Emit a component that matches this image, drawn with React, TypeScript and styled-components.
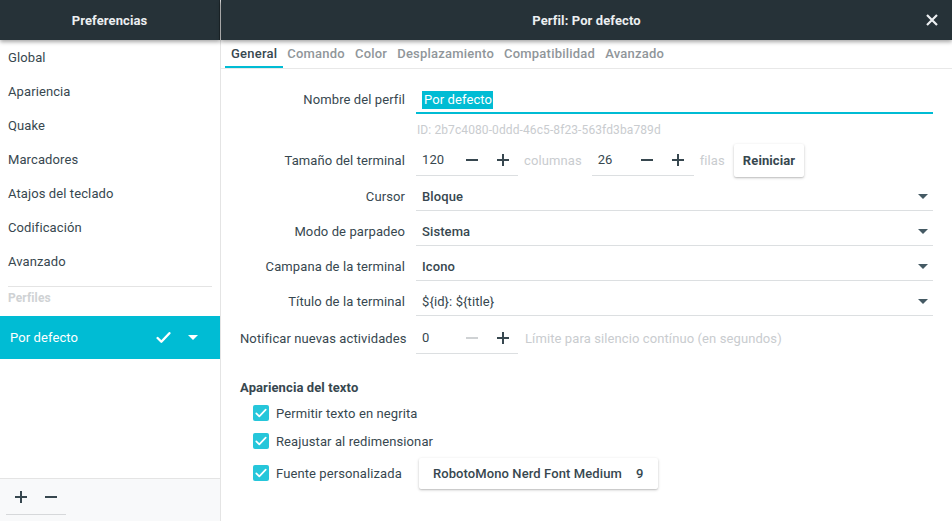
import styled, { createGlobalStyle } from "styled-components";

const GlobalStyle = createGlobalStyle`
  html, body {
    margin: 0;
    padding: 0;
    background: #ffffff;
  }
  * {
    box-sizing: border-box;
  }
  body {
    font-family: Roboto, "Noto Sans", "Liberation Sans", sans-serif;
    font-size: 13px;
    letter-spacing: 0.1px;
    color: #37474f;
  }
`;

const ACCENT = "#00bcd4";
const DARK = "#263238";

const Window = styled.div`
  width: 952px;
  height: 521px;
  display: flex;
  overflow: hidden;
  background: #fff;
`;

const Sidebar = styled.aside`
  width: 221px;
  flex-shrink: 0;
  display: flex;
  flex-direction: column;
  border-right: 1px solid #e4e4e4;
`;

const Main = styled.main`
  flex: 1;
  display: flex;
  flex-direction: column;
  min-width: 0;
`;

const HeaderBar = styled.header<{ $divider?: boolean }>`
  height: 40px;
  flex-shrink: 0;
  background: ${DARK};
  color: #eceff1;
  font-weight: 700;
  font-size: 13px;
  display: flex;
  align-items: center;
  justify-content: center;
  position: relative;
  z-index: 2;
  box-shadow: 0 2px 4px rgba(0, 0, 0, 0.35);
  border-right: ${(p) => (p.$divider ? "1px solid #1c2529" : "none")};
`;

const CloseButton = styled.button`
  position: absolute;
  right: 13px;
  top: 13px;
  width: 14px;
  height: 14px;
  padding: 0;
  border: none;
  background: transparent;
  display: flex;
`;

const NavList = styled.nav`
  display: flex;
  flex-direction: column;
  flex: 1;
`;

const NavItem = styled.div`
  height: 34px;
  display: flex;
  align-items: center;
  padding-left: 8px;
  color: #37474f;
`;

const Divider = styled.div`
  height: 1px;
  background: #e4e4e4;
  margin: 8px 8px 0;
`;

const SectionTitle = styled.div`
  height: 29px;
  padding: 4px 0 0 8px;
  line-height: 14px;
  font-size: 12px;
  font-weight: 700;
  color: #cfd2d4;
`;

const ProfileRow = styled.div`
  height: 43px;
  background: ${ACCENT};
  color: #fff;
  display: flex;
  align-items: center;
  padding: 0 22px 0 10px;
  font-size: 13px;
`;

const ProfileName = styled.span`
  flex: 1;
`;

const ProfileIcons = styled.div`
  display: flex;
  align-items: center;
  gap: 17px;
`;

const SidebarFooter = styled.div`
  height: 43px;
  flex-shrink: 0;
  background: #f8f9fa;
  border-top: 1px solid #e4e4e4;
  padding: 0 6px;
  display: flex;
  align-items: flex-start;
`;

const FooterButtons = styled.div`
  display: flex;
  width: 60px;
  height: 36px;
  border-bottom: 1px solid #d6d8da;
`;

const IconButton = styled.button<{ $width?: number }>`
  width: ${(p) => p.$width ?? 30}px;
  height: 100%;
  padding: 0;
  border: none;
  background: transparent;
  display: flex;
  align-items: center;
  justify-content: center;
`;

const Tabs = styled.div`
  height: 29px;
  flex-shrink: 0;
  display: flex;
  padding-left: 4px;
  border-bottom: 1px solid #e8e8e8;
`;

const Tab = styled.div<{ $active?: boolean }>`
  padding: 0 6px;
  margin-right: -2px;
  display: flex;
  align-items: center;
  font-weight: 500;
  letter-spacing: 0.22px;
  color: ${(p) => (p.$active ? "#37474f" : "#90969a")};
  border-bottom: 2px solid ${(p) => (p.$active ? ACCENT : "transparent")};
`;

const Form = styled.div`
  padding: 15px 19px 0 19px;
  display: flex;
  flex-direction: column;
`;

const Row = styled.div<{ $height: number; $top: number }>`
  display: flex;
  align-items: center;
  height: ${(p) => p.$height}px;
  margin-top: ${(p) => p.$top}px;
`;

const Label = styled.div`
  width: 165px;
  flex-shrink: 0;
  text-align: right;
  margin-right: 11px;
  color: #37474f;
  white-space: nowrap;
`;

const Control = styled.div`
  flex: 1;
  display: flex;
  align-items: center;
  height: 100%;
`;

const TextInput = styled.div`
  flex: 1;
  height: 100%;
  display: flex;
  align-items: center;
  padding: 3px 0 0 6px;
  border-bottom: 2px solid ${ACCENT};
`;

const Highlight = styled.span`
  background: ${ACCENT};
  color: #fff;
  padding: 1px 1px 2px 2px;
`;

const Hint = styled.div<{ $gap?: number }>`
  color: #c9cccf;
  margin-left: ${(p) => p.$gap ?? 0}px;
  margin-right: ${(p) => p.$gap ?? 0}px;
  white-space: nowrap;
`;

const IdText = styled(Hint)`
  font-size: 12px;
  padding: 1px 0 0 1px;
`;

const Spinner = styled.div`
  width: 102px;
  height: 32px;
  display: flex;
  align-items: center;
  border-bottom: 1px solid #dcdfe1;
  align-self: flex-start;
`;

const SpinValue = styled.div`
  width: 40px;
  padding-left: 6px;
  color: #37474f;
`;

const Spacer = styled.div<{ $width: number }>`
  width: ${(p) => p.$width}px;
  flex-shrink: 0;
`;

const RaisedButton = styled.button`
  height: 33px;
  padding: 0 9px;
  border: none;
  border-radius: 2px;
  background: #fff;
  box-shadow: 0 1px 3px rgba(0, 0, 0, 0.22), 0 1px 1px rgba(0, 0, 0, 0.08);
  font-family: inherit;
  font-size: 13px;
  letter-spacing: 0.1px;
  font-weight: 700;
  color: #37474f;
  display: flex;
  align-items: center;
  gap: 14px;
`;

const Select = styled.div<{ $bold?: boolean }>`
  flex: 1;
  height: 30px;
  display: flex;
  align-items: center;
  padding: 1px 5px 0 6px;
  border-bottom: 1px solid #dcdfe1;
  font-weight: ${(p) => (p.$bold ? 500 : 400)};
  color: #37474f;
`;

const SelectText = styled.span`
  flex: 1;
`;

const Heading = styled.div`
  margin-top: 23px;
  height: 20px;
  display: flex;
  align-items: center;
  font-weight: 700;
  color: #37474f;
`;

const CheckRow = styled.div<{ $height: number; $top?: number }>`
  height: ${(p) => p.$height}px;
  margin-top: ${(p) => p.$top ?? 0}px;
  padding-left: 13px;
  display: flex;
  align-items: center;
`;

const CheckBox = styled.span`
  width: 16px;
  height: 16px;
  border-radius: 2px;
  background: #26c6da;
  display: flex;
  align-items: center;
  justify-content: center;
  margin-right: 7px;
`;

const FontButton = styled(RaisedButton)`
  margin-left: 17px;
  height: 31px;
  padding: 0 15px 0 14px;
  font-weight: 500;
`;

const Minus = ({ color = "#37474f" }: { color?: string }) => (
  <svg width="12" height="12" viewBox="0 0 12 12">
    <path d="M0 6h12" stroke={color} strokeWidth="2" />
  </svg>
);

const Plus = ({ color = "#37474f" }: { color?: string }) => (
  <svg width="12" height="12" viewBox="0 0 12 12">
    <path d="M0 6h12M6 0v12" stroke={color} strokeWidth="2" />
  </svg>
);

const Caret = ({ color = "#455a64" }: { color?: string }) => (
  <svg width="10" height="5" viewBox="0 0 10 5">
    <path d="M0 0h10L5 5z" fill={color} />
  </svg>
);

const Check = ({ size = 14, width = 2 }: { size?: number; width?: number }) => (
  <svg width={size} height={size} viewBox="0 0 14 14">
    <path
      d="M1.5 7.5l3.5 3.5 7.5-8"
      fill="none"
      stroke="#fff"
      strokeWidth={width}
      strokeLinecap="round"
      strokeLinejoin="round"
    />
  </svg>
);

const SpinBox = ({ value, minusColor }: { value: string; minusColor?: string }) => (
  <Spinner>
    <SpinValue>{value}</SpinValue>
    <IconButton $width={31}>
      <Minus color={minusColor} />
    </IconButton>
    <IconButton $width={31}>
      <Plus />
    </IconButton>
  </Spinner>
);

const navItems = [
  "Global",
  "Apariencia",
  "Quake",
  "Marcadores",
  "Atajos del teclado",
  "Codificación",
  "Avanzado",
];

const tabs = [
  "General",
  "Comando",
  "Color",
  "Desplazamiento",
  "Compatibilidad",
  "Avanzado",
];

const selects = [
  { label: "Cursor", value: "Bloque", bold: true },
  { label: "Modo de parpadeo", value: "Sistema", bold: true },
  { label: "Campana de la terminal", value: "Icono", bold: true },
  { label: "Título de la terminal", value: "${id}: ${title}", bold: false },
];

const checks = ["Permitir texto en negrita", "Reajustar al redimensionar"];

export default function App() {
  return (
    <>
      <GlobalStyle />
      <Window>
        <Sidebar>
          <HeaderBar $divider>Preferencias</HeaderBar>
          <NavList>
            {navItems.map((item) => (
              <NavItem key={item}>{item}</NavItem>
            ))}
            <Divider />
            <SectionTitle>Perfiles</SectionTitle>
            <ProfileRow>
              <ProfileName>Por defecto</ProfileName>
              <ProfileIcons>
                <Check size={15} width={2.2} />
                <Caret color="#fff" />
              </ProfileIcons>
            </ProfileRow>
          </NavList>
          <SidebarFooter>
            <FooterButtons>
              <IconButton>
                <Plus />
              </IconButton>
              <IconButton>
                <Minus />
              </IconButton>
            </FooterButtons>
          </SidebarFooter>
        </Sidebar>

        <Main>
          <HeaderBar>
            Perfil: Por defecto
            <CloseButton aria-label="Cerrar">
              <svg width="14" height="14" viewBox="0 0 14 14">
                <path
                  d="M2 2l10 10M12 2L2 12"
                  stroke="#eceff1"
                  strokeWidth="2.2"
                />
              </svg>
            </CloseButton>
          </HeaderBar>
          <Tabs>
            {tabs.map((t, i) => (
              <Tab key={t} $active={i === 0}>
                {t}
              </Tab>
            ))}
          </Tabs>

          <Form>
            <Row $height={30} $top={0}>
              <Label>Nombre del perfil</Label>
              <Control>
                <TextInput>
                  <Highlight>Por defecto</Highlight>
                </TextInput>
              </Control>
            </Row>
            <Row $height={22} $top={4}>
              <Label />
              <Control>
                <IdText>ID: 2b7c4080-0ddd-46c5-8f23-563fd3ba789d</IdText>
              </Control>
            </Row>
            <Row $height={33} $top={4}>
              <Label>Tamaño del terminal</Label>
              <Control>
                <SpinBox value="120" />
                <Hint $gap={6}>columnas</Hint>
                <Spacer $width={4} />
                <SpinBox value="26" />
                <Hint $gap={6}>filas</Hint>
                <Spacer $width={3} />
                <RaisedButton>Reiniciar</RaisedButton>
              </Control>
            </Row>
            {selects.map((s, i) => (
              <Row key={s.label} $height={30} $top={i === 0 ? 4 : 5}>
                <Label>{s.label}</Label>
                <Control>
                  <Select $bold={s.bold}>
                    <SelectText>{s.value}</SelectText>
                    <Caret />
                  </Select>
                </Control>
              </Row>
            ))}
            <Row $height={32} $top={6}>
              <Label>Notificar nuevas actividades</Label>
              <Control>
                <SpinBox value="0" minusColor="#cfd2d4" />
                <Hint $gap={7}>Límite para silencio contínuo (en segundos)</Hint>
              </Control>
            </Row>

            <Heading>Apariencia del texto</Heading>
            {checks.map((c, i) => (
              <CheckRow key={c} $height={28} $top={i === 0 ? 2 : 0}>
                <CheckBox>
                  <Check size={12} width={2} />
                </CheckBox>
                {c}
              </CheckRow>
            ))}
            <CheckRow $height={32} $top={2}>
              <CheckBox>
                <Check size={12} width={2} />
              </CheckBox>
              Fuente personalizada
              <FontButton>
                <span>RobotoMono Nerd Font Medium</span>
                <span>9</span>
              </FontButton>
            </CheckRow>
          </Form>
        </Main>
      </Window>
    </>
  );
}
